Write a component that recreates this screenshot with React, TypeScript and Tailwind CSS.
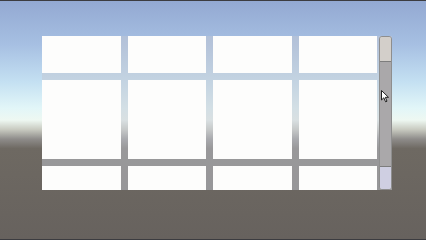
import React from 'react';

const cells = Array.from({ length: 12 }, (_, i) => i);

// small pointer cursor hovering the scrollbar
const Cursor = () => (
    <svg width="9" height="13" viewBox="0 0 9 13" className="absolute left-[381px] top-[89px]">
        <path d="M0.5 0.5 L0.5 10 L2.8 7.8 L4.6 11.8 L6 11.2 L4.3 7.3 L7.5 7.3 Z" fill="#ffffff" stroke="#202020" strokeWidth="1" strokeLinejoin="round" />
    </svg>
);

export default function App() {
    return (
        <div className="relative w-[426px] h-[240px] overflow-hidden border-y border-[#3c3c40] bg-[linear-gradient(to_bottom,#93a9d2_0%,#a6bfe2_18%,#c4e0f2_34%,#e2f6f8_45%,#eef8f2_50%,#c8cac0_54%,#8e8c8a_58%,#6e6962_62%,#67625e_100%)] font-['Liberation_Sans',sans-serif]">
            <div className="pt-[35px] pl-[42px]">
                <div className="flex w-[350px] h-[154px] gap-[2px] bg-[rgba(195,200,210,0.5)]">
                    <div className="w-[335px] h-full overflow-hidden">
                        <div className="-mt-[42px] grid grid-cols-4 gap-x-[7px] gap-y-[7px]">
                            {cells.map((i) => (
                                <div key={i} className="h-[79px] bg-[#fdfdfc]" />
                            ))}
                        </div>
                    </div>
                    <div className="flex flex-col w-[13px] h-full rounded-[3px] border border-[#8e8e8e] bg-[#d0cbc6] overflow-hidden">
                        <div className="h-[24px] bg-[#d3cfca]" />
                        <div className="flex-1 border-y border-[#7d7d7d] bg-[#aaa8aa]" />
                        <div className="h-[22px] bg-[#cfcfe2]" />
                    </div>
                </div>
            </div>
            <Cursor />
        </div>
    );
}
